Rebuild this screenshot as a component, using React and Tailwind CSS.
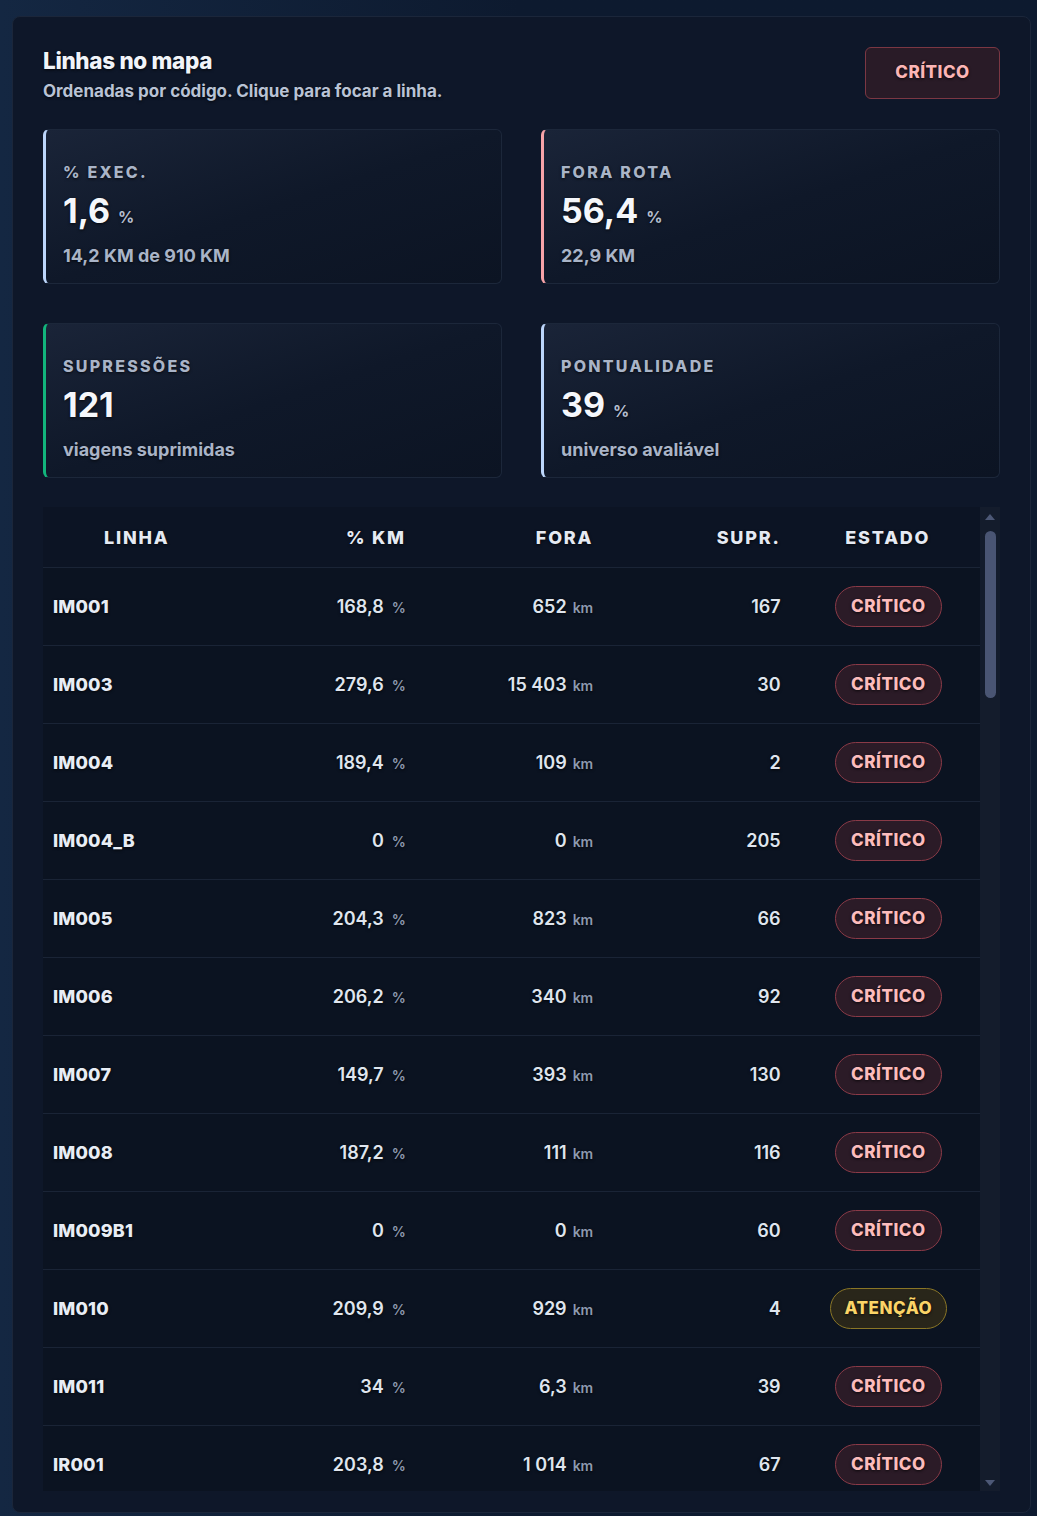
import React from "react";

const kpis = [
  { label: "% EXEC.", value: "1,6", unit: "%", sub: "14,2 KM de 910 KM", accent: "border-l-[#bcd6fb]" },
  { label: "FORA ROTA", value: "56,4", unit: "%", sub: "22,9 KM", accent: "border-l-[#f7a3a8]" },
  { label: "SUPRESSÕES", value: "121", unit: "", sub: "viagens suprimidas", accent: "border-l-[#12b57c]" },
  { label: "PONTUALIDADE", value: "39", unit: "%", sub: "universo avaliável", accent: "border-l-[#bcd6fb]" },
];

const rows = [
  ["IM001", "168,8", "652", "167", "c"],
  ["IM003", "279,6", "15 403", "30", "c"],
  ["IM004", "189,4", "109", "2", "c"],
  ["IM004_B", "0", "0", "205", "c"],
  ["IM005", "204,3", "823", "66", "c"],
  ["IM006", "206,2", "340", "92", "c"],
  ["IM007", "149,7", "393", "130", "c"],
  ["IM008", "187,2", "111", "116", "c"],
  ["IM009B1", "0", "0", "60", "c"],
  ["IM010", "209,9", "929", "4", "a"],
  ["IM011", "34", "6,3", "39", "c"],
  ["IR001", "203,8", "1 014", "67", "c"],
];

function Badge({ kind }) {
  if (kind === "a") {
    return (
      <span className="inline-flex items-center justify-center h-[41px] px-[14px] rounded-full border-[1.5px] border-[#8a7626] bg-[#29261a] text-[#fbd467] text-[17px] font-extrabold tracking-[0.03em]">
        ATENÇÃO
      </span>
    );
  }
  return (
    <span className="inline-flex items-center justify-center h-[41px] px-[15px] rounded-full border-[1.5px] border-[#8a3a47] bg-[#2b1b27] text-[#fcbcbc] text-[17px] font-extrabold tracking-[0.03em]">
      CRÍTICO
    </span>
  );
}

export default function App() {
  return (
    <div
      className="w-[1037px] h-[1516px] pt-4 pl-3 pr-[6px] pb-[3px] bg-gradient-to-r from-[#142742] via-[#0d1a2f] to-[#0d1a2f] [text-shadow:0_1px_3px_rgba(0,0,0,0.75)]"
      style={{ fontFamily: "Inter, 'Noto Sans', sans-serif" }}
    >
      <div className="h-full rounded-lg border border-[#1b263a] bg-[#0e1729] pt-[30px] px-[30px] pb-[22px] flex flex-col">
        {/* Header */}
        <div className="h-[52px] flex justify-between items-start">
          <div>
            <div className="text-[22.5px] leading-[28px] font-extrabold text-[#f1f4f9] tracking-[-0.015em]">Linhas no mapa</div>
            <div className="mt-[6px] text-[17px] leading-[21px] font-bold text-[#b9c3d5]">
              Ordenadas por código. Clique para focar a linha.
            </div>
          </div>
          <div className="h-[52px] w-[135px] flex items-center justify-center rounded-md border-[1.5px] border-[#7b3743] bg-[#291b27] text-[#fbb5b5] text-[17px] font-extrabold tracking-[0.03em]">
            CRÍTICO
          </div>
        </div>

        {/* KPI grid */}
        <div className="mt-[30px] grid grid-cols-2 gap-x-[39px] gap-y-[39px]">
          {kpis.map((k) => (
            <div
              key={k.label}
              className={`h-[155px] rounded-md border border-[#1c273a] border-l-[3px] ${k.accent} bg-gradient-to-br from-[#1a2438] via-[#0f1829] to-[#0c1423] pt-[32px] pl-[17px]`}
            >
              <div className="text-[16px] leading-[20px] font-extrabold tracking-[0.14em] text-[#a9b4c7]">{k.label}</div>
              <div className="mt-[9px] h-[40px] flex items-baseline">
                <span className="text-[34px] leading-[40px] font-bold text-[#f5f7fb]">{k.value}</span>
                {k.unit && <span className="ml-[8px] text-[16px] font-bold text-[#b3bdcf]">{k.unit}</span>}
              </div>
              <div className="mt-[13px] text-[18px] leading-[24px] font-bold text-[#a9b4c7]">{k.sub}</div>
            </div>
          ))}
        </div>

        {/* Table */}
        <div className="mt-[29px] h-[984px] flex">
          <div className="w-[939px] h-full overflow-hidden bg-[#0b1321]">
            <div className="h-[60px] grid grid-cols-5 items-center bg-[#0c1424] text-[18px] font-extrabold tracking-[0.1em] text-[#e5eaf3]">
              <div className="text-center">LINHA</div>
              <div className="text-right pr-3">% KM</div>
              <div className="text-right pr-3">FORA</div>
              <div className="text-right pr-3">SUPR.</div>
              <div className="text-center pl-[3px]">ESTADO</div>
            </div>
            {rows.map((r) => (
              <div key={r[0]} className="h-[78px] shrink-0 grid grid-cols-5 items-center border-t border-[#1a2436]">
                <div className="pl-[10px] text-[18px] font-extrabold tracking-[0.01em] text-[#e8edf5]">{r[0]}</div>
                <div className="text-right pr-3">
                  <span className="text-[18px] font-semibold text-[#dfe5ee]">{r[1]}</span>
                  <span className="ml-[8px] text-[14px] font-semibold text-[#8e9ab0]">%</span>
                </div>
                <div className="text-right pr-3">
                  <span className="text-[18px] font-semibold text-[#dfe5ee]">{r[2]}</span>
                  <span className="ml-[6px] text-[14px] font-semibold text-[#8e9ab0]">km</span>
                </div>
                <div className="text-right pr-3 text-[18px] font-semibold text-[#dfe5ee]">{r[3]}</div>
                <div className="flex justify-center pl-[4px]">
                  <Badge kind={r[4]} />
                </div>
              </div>
            ))}
          </div>
          {/* scrollbar drawing */}
          <div className="w-[20px] h-full bg-[#141c2c] flex flex-col items-center pt-[7px] pb-[5px]">
            <div className="w-0 h-0 border-l-[5px] border-r-[5px] border-b-[6px] border-l-transparent border-r-transparent border-b-[#4d5876]" />
            <div className="mt-[11px] w-[11px] h-[167px] rounded-full bg-[#4a5573]" />
            <div className="flex-1" />
            <div className="w-0 h-0 border-l-[5px] border-r-[5px] border-t-[6px] border-l-transparent border-r-transparent border-t-[#4d5876]" />
          </div>
        </div>
      </div>
    </div>
  );
}
